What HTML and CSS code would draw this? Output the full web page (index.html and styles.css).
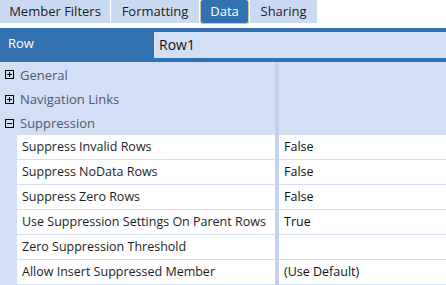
FILE: index.html
```html
<!DOCTYPE html>
<html>
<head>
<meta charset="utf-8">
<link rel="stylesheet" href="styles.css">
</head>
<body>
<div class="tabs">
  <div class="tab t1">Member Filters</div>
  <div class="tab t2">Formatting</div>
  <div class="tab t3 active">Data</div>
  <div class="tab t4">Sharing</div>
</div>
<div class="header">
  <div class="hlabel">Row</div>
  <div class="hinput">Row1</div>
</div>
<div class="grid">
  <div class="cat h25">
    <div class="catname"><svg class="tog" width="9" height="9" viewBox="0 0 9 9"><rect x="0.5" y="0.5" width="8" height="8" fill="none" stroke="#000"/><path d="M2 4.5H7M4.5 2V7" stroke="#000"/></svg><span>General</span></div>
    <div class="sep"></div><div class="catval"></div>
  </div>
  <div class="cat">
    <div class="catname"><svg class="tog" width="9" height="9" viewBox="0 0 9 9"><rect x="0.5" y="0.5" width="8" height="8" fill="none" stroke="#000"/><path d="M2 4.5H7M4.5 2V7" stroke="#000"/></svg><span>Navigation Links</span></div>
    <div class="sep"></div><div class="catval"></div>
  </div>
  <div class="cat">
    <div class="catname"><svg class="tog" width="9" height="9" viewBox="0 0 9 9"><rect x="0.5" y="0.5" width="8" height="8" fill="none" stroke="#000"/><path d="M2 4.5H7" stroke="#000"/></svg><span>Suppression</span></div>
    <div class="sep"></div><div class="catval"></div>
  </div>
  <div class="prop"><div class="indent"></div><div class="pname">Suppress Invalid Rows</div><div class="sep"></div><div class="pval">False</div></div>
  <div class="prop"><div class="indent"></div><div class="pname">Suppress NoData Rows</div><div class="sep"></div><div class="pval">False</div></div>
  <div class="prop"><div class="indent"></div><div class="pname">Suppress Zero Rows</div><div class="sep"></div><div class="pval">False</div></div>
  <div class="prop"><div class="indent"></div><div class="pname">Use Suppression Settings On Parent Rows</div><div class="sep"></div><div class="pval">True</div></div>
  <div class="prop"><div class="indent"></div><div class="pname">Zero Suppression Threshold</div><div class="sep"></div><div class="pval"></div></div>
  <div class="prop"><div class="indent"></div><div class="pname">Allow Insert Suppressed Member</div><div class="sep"></div><div class="pval">(Use Default)</div></div>
</div>
</body>
</html>
```
FILE: styles.css
```css
html, body {
  margin: 0;
  padding: 0;
}
body {
  width: 446px;
  height: 285px;
  overflow: hidden;
  background: #ffffff;
  font-family: "Open Sans", "Noto Sans", sans-serif;
  font-size: 12.5px;
  color: #1e1e1e;
}
.tabs {
  display: flex;
  height: 23px;
  gap: 1px;
  align-items: flex-start;
}
.tab {
  height: 23px;
  line-height: 23px;
  background: #cadaf3;
  text-align: center;
  font-size: 13px;
  color: #1c1c1c;
  box-sizing: border-box;
}
.t1 { width: 110px; }
.t2 { width: 88px; }
.t3 { width: 49px; }
.t4 { width: 67px; }
.tab.active {
  background: #3372b0;
  color: #ffffff;
  height: 24px;
  border-radius: 3px;
  border: 1px solid #c9c79a;
  border-top: none;
  line-height: 22px;
}
.header {
  margin-top: 5px;
  height: 34px;
  background: #3372b0;
  display: flex;
  align-items: center;
}
.hlabel {
  width: 146px;
  padding-left: 8px;
  color: #ffffff;
  font-size: 13px;
  align-self: flex-start;
  padding-top: 6px;
}
.hinput {
  flex: 1;
  height: 26px;
  line-height: 26px;
  background: #d3dff5;
  padding-left: 5px;
  font-size: 14px;
  color: #111;
}
.grid {
  background: #d3dff5;
}
.cat {
  display: flex;
  height: 24px;
}
.cat.h25 { height: 25px; }
.catname {
  width: 275px;
  display: flex;
  align-items: center;
  color: #4e5a70;
  font-size: 13px;
}
.tog {
  margin-left: 5px;
  margin-right: 6px;
  flex: none;
}
.sep {
  width: 4px;
  background: #c3d1eb;
  flex: none;
}
.catval { flex: 1; }
.prop {
  display: flex;
  height: 25px;
}
.indent {
  width: 17px;
  flex: none;
}
.pname {
  width: 253px;
  padding-left: 5px;
  background: #ffffff;
  border-bottom: 1px solid #d3dff5;
  line-height: 24px;
  white-space: nowrap;
  color: #1e1e1e;
}
.pval {
  flex: 1;
  padding-left: 5px;
  background: #ffffff;
  border-bottom: 1px solid #d3dff5;
  line-height: 24px;
  color: #111;
}
```
